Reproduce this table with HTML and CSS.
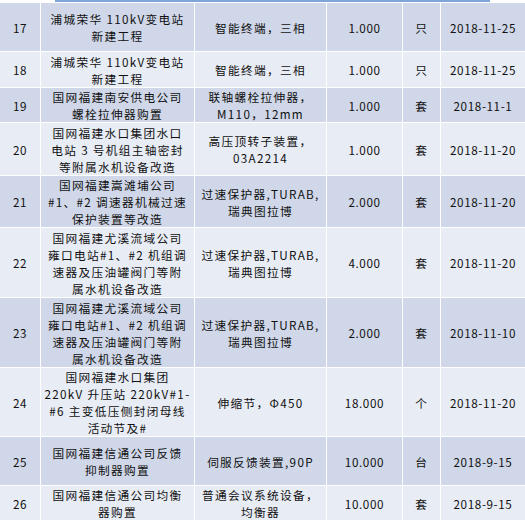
FILE: index.html
```html
<!DOCTYPE html>
<html lang="zh">
<head>
<meta charset="utf-8">
<link rel="stylesheet" href="styles.css">
</head>
<body>
<div class="topline"></div>
<table class="grid">
  <colgroup>
    <col class="c1"><col class="c2"><col class="c3"><col class="c4"><col class="c5"><col class="c6">
  </colgroup>
  <tr class="dark h49">
    <td>17</td><td>浦城荣华 110kV变电站<br>新建工程</td><td>智能终端，三相</td><td>1.000</td><td>只</td><td>2018-11-25</td>
  </tr>
  <tr class="light h36">
    <td>18</td><td>浦城荣华 110kV变电站<br>新建工程</td><td>智能终端，三相</td><td>1.000</td><td>只</td><td>2018-11-25</td>
  </tr>
  <tr class="dark h35">
    <td>19</td><td>国网福建南安供电公司<br>螺栓拉伸器购置</td><td>联轴螺栓拉伸器，<br>M110，12mm</td><td>1.000</td><td>套</td><td>2018-11-1</td>
  </tr>
  <tr class="light h53">
    <td>20</td><td>国网福建水口集团水口<br>电站 3 号机组主轴密封<br>等附属水机设备改造</td><td>高压顶转子装置，<br>03A2214</td><td>1.000</td><td>套</td><td>2018-11-20</td>
  </tr>
  <tr class="dark h52">
    <td>21</td><td>国网福建嵩滩埔公司<br>#1、#2 调速器机械过速<br>保护装置等改造</td><td>过速保护器,TURAB,<br>瑞典图拉博</td><td>2.000</td><td>套</td><td>2018-11-20</td>
  </tr>
  <tr class="light h70">
    <td>22</td><td>国网福建尤溪流域公司<br>雍口电站#1、#2 机组调<br>速器及压油罐阀门等附<br>属水机设备改造</td><td>过速保护器,TURAB,<br>瑞典图拉博</td><td>4.000</td><td>套</td><td>2018-11-20</td>
  </tr>
  <tr class="dark h70">
    <td>23</td><td>国网福建尤溪流域公司<br>雍口电站#1、#2 机组调<br>速器及压油罐阀门等附<br>属水机设备改造</td><td>过速保护器,TURAB,<br>瑞典图拉博</td><td>2.000</td><td>套</td><td>2018-11-10</td>
  </tr>
  <tr class="light h69">
    <td>24</td><td>国网福建水口集团<br>220kV 升压站 220kV#1-<br>#6 主变低压侧封闭母线<br>活动节及#</td><td>伸缩节，Φ450</td><td>18.000</td><td>个</td><td>2018-11-20</td>
  </tr>
  <tr class="dark h49">
    <td>25</td><td>国网福建信通公司反馈<br>抑制器购置</td><td>伺服反馈装置,90P</td><td>10.000</td><td>台</td><td>2018-9-15</td>
  </tr>
  <tr class="light h35">
    <td>26</td><td>国网福建信通公司均衡<br>器购置</td><td>普通会议系统设备，<br>均衡器</td><td>10.000</td><td>套</td><td>2018-9-15</td>
  </tr>
</table>
</body>
</html>
```

FILE: styles.css
```css
html, body {
  margin: 0;
  padding: 0;
  background: #ffffff;
  overflow: hidden;
}

.topline {
  height: 2px;
  width: 435px;
  margin-left: 55px;
  background: #7ea6da;
}

.grid {
  border-collapse: separate;
  border-spacing: 0;
  table-layout: fixed;
  width: 525px;
  font-family: "Noto Sans CJK SC", "Noto Sans", sans-serif;
  font-size: 11.7px;
  line-height: 17px;
  letter-spacing: 1.3px;
  color: #111;
}

.c1 { width: 41px; }
.c2 { width: 154px; }
.c3 { width: 132px; }
.c4 { width: 76px; }
.c5 { width: 38px; }
.c6 { width: 84px; }

.grid td {
  box-sizing: border-box;
  padding: 0;
  text-align: center;
  vertical-align: middle;
  border-top: 1px solid #ffffff;
  border-right: 1px solid #ffffff;
  white-space: nowrap;
  overflow: hidden;
}

.grid td:first-child,
.grid td:nth-child(n+4) {
  letter-spacing: 0.6px;
}

.grid td:last-child {
  border-right: none;
}

.dark td { background: #cfd7e8; }
.light td { background: #e8ecf5; }

.h35 { height: 35px; }
.h36 { height: 36px; }
.h49 { height: 49px; }
.h52 { height: 52px; }
.h53 { height: 53px; }
.h69 { height: 69px; }
.h70 { height: 70px; }
```
